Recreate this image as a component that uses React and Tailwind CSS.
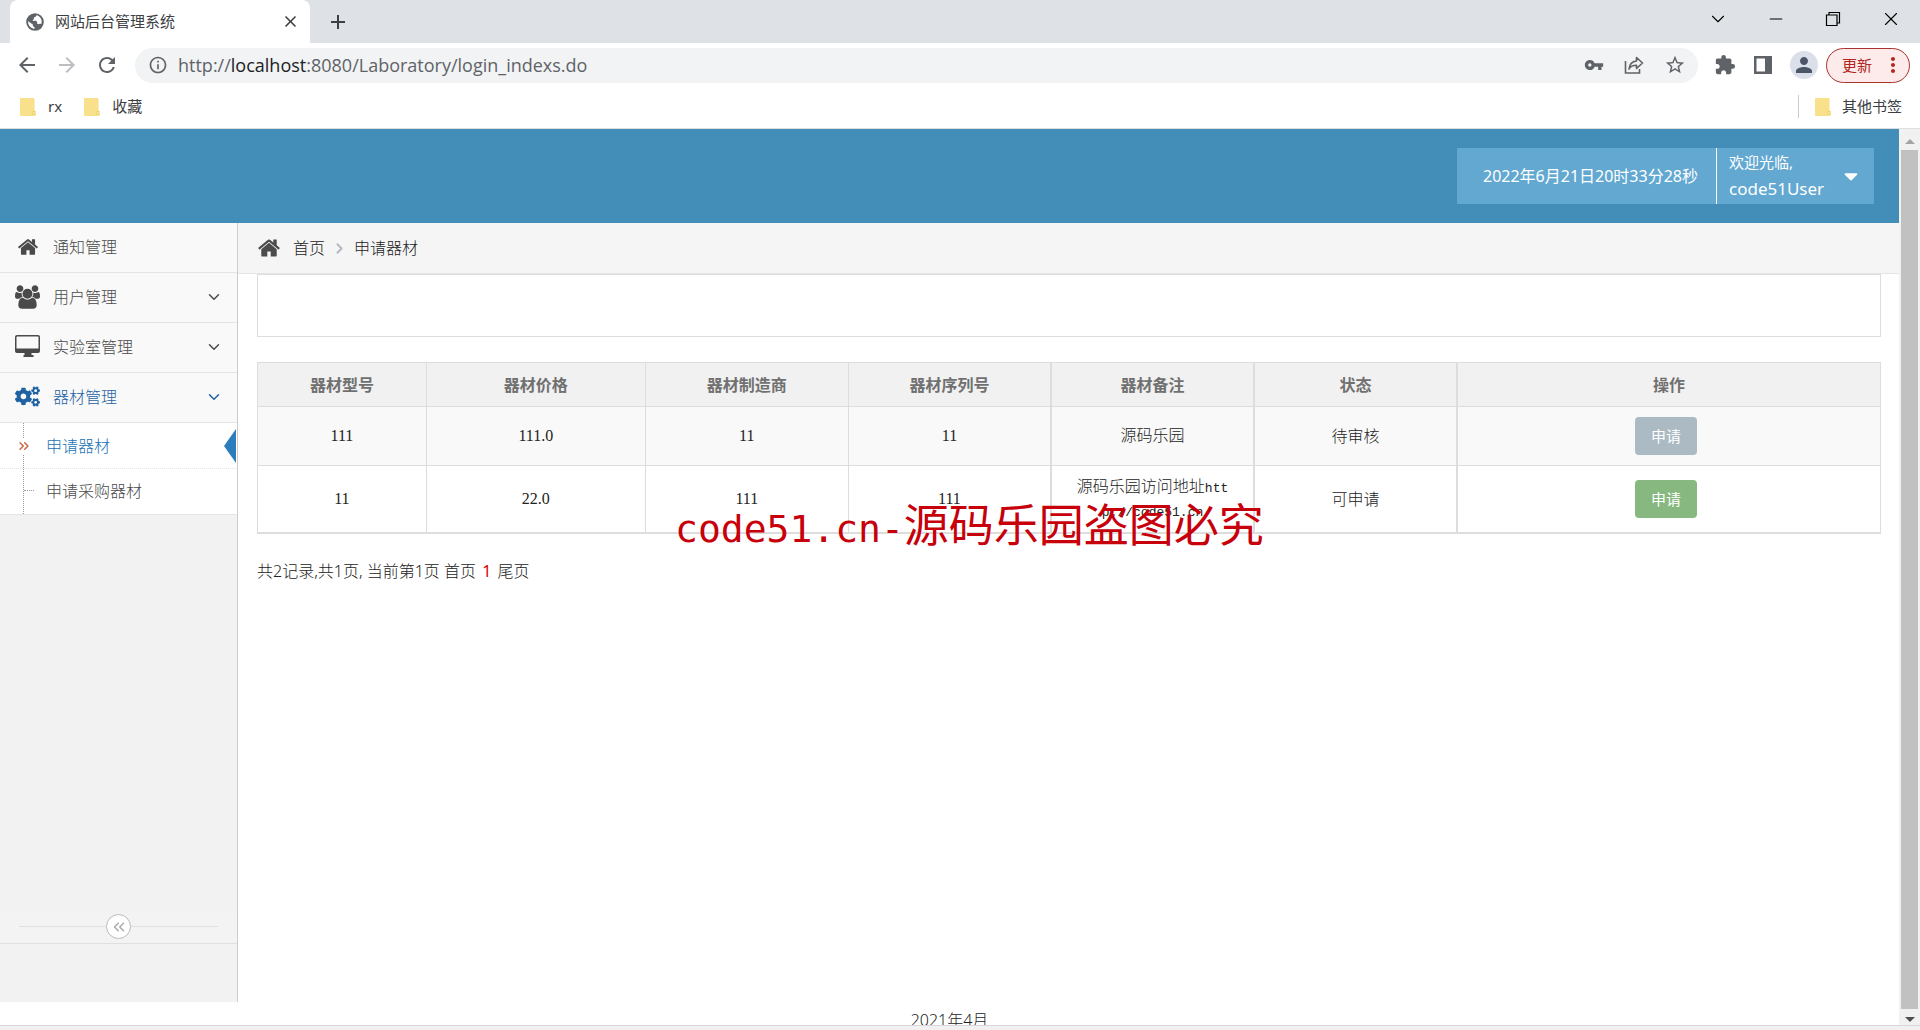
import { ChevronDown, ChevronRight, ChevronsLeft, ChevronsRight, Minus, X } from "lucide-react";
import { FaCaretDown, FaCogs } from "react-icons/fa";
import {
    MdArrowBack,
    MdArrowForward,
    MdClose,
    MdAdd,
    MdExtension,
    MdInfoOutline,
    MdMoreVert,
    MdPerson,
    MdRefresh,
    MdStarBorder,
    MdVpnKey,
} from "react-icons/md";

function GlobeIcon({ className }) {
    return (
        <svg viewBox="0 0 18 18" className={className} aria-hidden="true">
            <circle cx="9" cy="9" r="8.800" fill="currentColor" />
            <path
                d="M11.300 2.200c-1.500.2-1.200 1.500-2.200 1.700-1 .1-1.400.8-1.200 1.700.2.800-.5 1.200-1.300 1.300l.5 1.200c1.500-.4 3.500-.4 4 .8.4 1-.3 1.500.4 2.100.8.500 1.700-.4 2.700-.2l1.200.2a7 7 0 0 0-4.100-8.800zM2.100 8.200a7 7 0 0 0 6.200 7.700l.3-1.800c-1.200-.3-1.900-1-1.800-2.100.1-.9-.6-1.300-1.500-1.600C4.200 10 3.700 8.700 2.100 8.200z"
                fill="#fff"
            />
        </svg>
    );
}

function HomeIcon({ className }) {
    return (
        <svg viewBox="0 0 1792 1792" fill="currentColor" className={className} aria-hidden="true">
            <path d="M1472 992v480q0 26-19 45t-45 19h-384v-384h-256v384h-384q-26 0-45-19t-19-45v-480q0-1 .5-3t.5-3l575-474 575 474q1 2 1 6zm223-69l-62 74q-8 9-21 11h-3q-13 0-21-7l-692-577-692 577q-12 8-24 7-13-2-21-11l-62-74q-8-10-7-23.5t11-21.5l719-599q32-26 76-26t76 26l244 204v-195q0-14 9-23t23-9h192q14 0 23 9t9 23v408l219 182q10 8 11 21.5t-7 23.5z" />
        </svg>
    );
}

function UsersIcon({ className }) {
    return (
        <svg viewBox="0 0 1920 1792" fill="currentColor" className={className} aria-hidden="true">
            <path d="M593 896q-162 5-265 128h-134q-82 0-138-40.5t-56-118.5q0-353 124-353 6 0 43.5 21t97.5 42.5 119 21.5q67 0 133-23-5 37-5 66 0 139 81 256zm1071 637q0 120-73 189.5t-194 69.5h-874q-121 0-194-69.5t-73-189.5q0-53 3.5-103.5t14-109 26.5-108.5 43-97.5 62-81 85.5-53.5 111.5-20q10 0 43 21.5t73 48 107 48 135 21.5 135-21.5 107-48 73-48 43-21.5q61 0 111.5 20t85.5 53.5 62 81 43 97.5 26.5 108.5 14 109 3.5 103.5zm-1024-1277q0 106-75 181t-181 75-181-75-75-181 75-181 181-75 181 75 75 181zm704 384q0 159-112.5 271.5t-271.5 112.5-271.5-112.5-112.5-271.5 112.5-271.5 271.5-112.5 271.5 112.5 112.5 271.5zm576 225q0 78-56 118.5t-138 40.5h-134q-103-123-265-128 81-117 81-256 0-29-5-66 66 23 133 23 59 0 119-21.5t97.5-42.5 43.5-21q124 0 124 353zm-128-609q0 106-75 181t-181 75-181-75-75-181 75-181 181-75 181 75 75 181z" />
        </svg>
    );
}

function DesktopIcon({ className }) {
    return (
        <svg viewBox="0 0 25 23" fill="currentColor" className={className} aria-hidden="true">
            <path
                fillRule="evenodd"
                d="M2 0h21a2 2 0 0 1 2 2v14a2 2 0 0 1-2 2h-6.500v2h2v2H8.500v-2h1v-2H2a2 2 0 0 1-2-2V2a2 2 0 0 1 2-2zm.2 1.500a.7.7 0 0 0-.7.7v11.300h22V2.200a.7.7 0 0 0-.7-.7z"
            />
        </svg>
    );
}

function ShareIcon({ className }) {
    return (
        <svg viewBox="0 0 20 18" fill="none" stroke="currentColor" strokeWidth="1.600" className={className} aria-hidden="true">
            <path d="M1.500 5v12h14v-4" />
            <path d="M12.500 1.500 18.500 7l-6 5.500V9.300C9 9.300 6.500 10.500 5 13c.4-4 3-7.500 7.500-8z" strokeLinejoin="round" />
        </svg>
    );
}

function FolderIcon() {
    return (
        <svg viewBox="0 0 16 18" className="h-[18px] w-4 shrink-0" aria-hidden="true">
            <path d="M1 0h12.500a1 1 0 0 1 1 1v11l1 1v4a1 1 0 0 1-1 1H1a1 1 0 0 1-1-1V1a1 1 0 0 1 1-1z" fill="#f9e08a" />
            <path d="M12.500 13h3v4h-3z" fill="#f0d060" />
            <path d="M13.300 13.800h1.400v2.400h-1.400z" fill="#fbe9a6" />
        </svg>
    );
}

const columns = ["器材型号", "器材价格", "器材制造商", "器材序列号", "器材备注", "状态", "操作"];

const rows = [
    { model: "111", price: "111.0", maker: "11", serial: "11", remark: "源码乐园", status: "待审核", open: false },
    {
        model: "11",
        price: "22.0",
        maker: "111",
        serial: "111",
        remark: "源码乐园访问地址",
        url: ["htt", "p://code51.cn"],
        status: "可申请",
        open: true,
    },
];

const menu = [
    { label: "通知管理", icon: <HomeIcon className="size-[22px]" /> },
    { label: "用户管理", icon: <UsersIcon className="h-6 w-[25px]" />, arrow: true },
    { label: "实验室管理", icon: <DesktopIcon className="h-[23px] w-[25px]" />, arrow: true },
    { label: "器材管理", icon: <FaCogs className="size-[25px]" />, arrow: true, active: true },
];

function TabStrip() {
    return (
        <div className="flex h-[43px] shrink-0 items-stretch bg-[#dee1e6] pl-[10px]">
            <div className="flex w-[300px] items-center rounded-t-lg bg-white pr-[10px] pl-4 text-[#3c4043]">
                <GlobeIcon className="size-[18px] text-[#5f6368]" />
                <span className="ml-[11px] flex-1 text-[15px]">网站后台管理系统</span>
                <button aria-label="关闭标签页">
                    <MdClose className="size-[19px]" />
                </button>
            </div>
            <button aria-label="新标签页" className="ml-4 text-[#3c4043]">
                <MdAdd className="size-6" />
            </button>
            <div className="ml-auto flex items-center gap-[37px] pr-[18px] pb-[6px] text-black">
                <button aria-label="搜索标签页">
                    <ChevronDown className="size-[22px]" strokeWidth={1.2} />
                </button>
                <button aria-label="最小化">
                    <Minus className="size-5" strokeWidth={1.2} />
                </button>
                <button aria-label="还原">
                    <svg viewBox="0 0 20 20" fill="none" stroke="currentColor" strokeWidth="1.200" className="size-5">
                        <path d="M3.500 6h10.500v10.500H3.500zM6 6V3.500h10.500V14H14" />
                    </svg>
                </button>
                <button aria-label="关闭">
                    <X className="size-[22px]" strokeWidth={1.2} />
                </button>
            </div>
        </div>
    );
}

function Toolbar() {
    return (
        <div className="flex h-11 shrink-0 items-center bg-white pr-[10px] pl-[15px] text-[#5f6368]">
            <div className="flex gap-4">
                <button aria-label="后退">
                    <MdArrowBack className="size-6" />
                </button>
                <button aria-label="前进" className="text-[#bcbec1]">
                    <MdArrowForward className="size-6" />
                </button>
                <button aria-label="刷新">
                    <MdRefresh className="size-6" />
                </button>
            </div>
            <div className="ml-4 flex h-[35px] flex-1 items-center gap-5 rounded-full bg-[#f1f3f4] pr-3 pl-[13px]">
                <MdInfoOutline className="-mr-[10px] size-5" />
                <div className="flex-1 font-['Open_Sans'] text-[18px]">
                    http://<span className="text-[#202124]">localhost</span>:8080/Laboratory/login_indexs.do
                </div>
                <MdVpnKey className="size-5" />
                <ShareIcon className="h-[18px] w-5" />
                <MdStarBorder className="size-[22px]" />
            </div>
            <div className="flex items-center gap-[18px] pl-4">
                <MdExtension className="size-[22px]" />
                <svg viewBox="0 0 18 18" className="size-[18px]" aria-hidden="true">
                    <path fillRule="evenodd" fill="currentColor" d="M0 0h18v18H0zM2.500 2.500v13h8.500V2.500z" />
                </svg>
                <span className="flex size-7 items-center justify-center rounded-full bg-[#dadfea]">
                    <MdPerson className="size-6 text-[#4a5568]" />
                </span>
            </div>
            <button className="ml-2 flex h-[35px] w-[84px] items-center justify-between rounded-full border border-[#a8322c] bg-[#fcebea] pr-1 pl-[15px] text-[15px] text-[#b3261e]">
                更新
                <MdMoreVert className="size-6" />
            </button>
        </div>
    );
}

function Bookmarks() {
    return (
        <div className="flex h-[42px] shrink-0 items-center border-b border-[#dcdfe2] bg-white pr-[18px] pb-[2px] pl-5 text-[15px] text-[#3c4043]">
            <a href="#rx" className="flex items-center gap-3">
                <FolderIcon />
                rx
            </a>
            <a href="#fav" className="ml-[22px] flex items-center gap-3">
                <FolderIcon />
                收藏
            </a>
            <a href="#other" className="ml-auto flex items-center gap-[11px] border-l border-[#c8cbce] pl-4">
                <FolderIcon />
                其他书签
            </a>
        </div>
    );
}

function Header() {
    return (
        <header className="flex h-[94px] shrink-0 items-center justify-end bg-[#438eb9] pr-[25px] text-white">
            <div className="flex h-14 items-stretch bg-[#62a8d1]">
                <div className="flex w-[259px] items-center justify-center pl-2 text-base">2022年6月21日20时33分28秒</div>
                <button className="flex w-[158px] items-center justify-between border-l border-white pr-3 pl-3 text-left">
                    <span>
                        <span className="block text-[15px] leading-[26px]">欢迎光临,</span>
                        <span className="block text-[17px] leading-[28px]">code51User</span>
                    </span>
                    <FaCaretDown className="size-[22px]" />
                </button>
            </div>
        </header>
    );
}

function Sidebar() {
    return (
        <aside className="flex w-[238px] shrink-0 flex-col border-r border-[#ccc] bg-[#f2f2f2] font-light">
            <nav className="text-base text-[#4a4a4a]">
                {menu.map((item) => (
                    <a
                        key={item.label}
                        href="#menu"
                        className={`flex h-[50px] items-center border-b border-[#e5e5e5] bg-[#f9f9f9] pr-[14px] pb-[2px] pl-[15px] ${item.active ? "text-[#1f62a4]" : ""}`}
                    >
                        <span className="flex w-[25px] justify-center">{item.icon}</span>
                        <span className="ml-[13px] flex-1">{item.label}</span>
                        {item.arrow && <ChevronDown className="size-[18px]" strokeWidth={2} />}
                    </a>
                ))}
                <div className="relative border-b border-[#e5e5e5] bg-white">
                    <span className="absolute inset-y-0 left-[23px] border-l border-dotted border-[#999]" />
                    <a href="#apply" className="relative flex h-[46px] items-center border-b border-dotted border-[#e4e4e4] pl-4 text-[#2272b4]">
                        <ChevronsRight className="size-4 bg-white text-[#c86139]" strokeWidth={2} />
                        <span className="ml-[14px]">申请器材</span>
                        <span className="absolute top-[6px] right-[1px] border-y-[17px] border-r-[12px] border-y-transparent border-r-[#2b7dbc]" />
                    </a>
                    <a href="#purchase" className="flex h-[45px] items-center pb-[2px] pl-6">
                        <span className="w-[10px] border-t border-dotted border-[#999]" />
                        <span className="ml-3">申请采购器材</span>
                    </a>
                </div>
            </nav>
            <div className="mt-auto mb-[58px] flex h-8 items-center border-b border-[#e0e0e0] bg-[#f3f3f3] px-[19px] pb-[2px]">
                <span className="flex-1 border-t border-[#e0e0e0]" />
                <button aria-label="收起菜单" className="flex size-[25px] items-center justify-center rounded-full border border-[#bbb] bg-white text-[#aaa]">
                    <ChevronsLeft className="size-[18px]" strokeWidth={2} />
                </button>
                <span className="flex-1 border-t border-[#e0e0e0]" />
            </div>
        </aside>
    );
}

function NumberCell({ children }) {
    return <td className="border-l border-[#ddd] font-['Liberation_Serif']">{children}</td>;
}

function EquipmentTable() {
    return (
        <table className="mt-[25px] w-full table-fixed border-collapse border border-b-2 border-[#ddd] text-center text-base">
            <colgroup>
                <col className="w-[10.400%]" />
                <col className="w-[13.500%]" />
                <col className="w-[12.500%]" />
                <col className="w-[12.500%]" />
                <col className="w-[12.500%]" />
                <col className="w-[12.500%]" />
                <col />
            </colgroup>
            <thead>
                <tr className="h-11 bg-[#f1f1f1] text-[#707070]">
                    {columns.map((name, i) => (
                        <th key={name} className={`border-b border-[#ddd] font-bold ${i > 3 ? "border-l-2" : "border-l"}`}>
                            {name}
                        </th>
                    ))}
                </tr>
            </thead>
            <tbody className="text-[#222]">
                {rows.map((row) => (
                    <tr key={row.price} className={row.open ? "h-[67px] bg-white" : "h-[59px] border-b border-[#ddd] bg-[#f9f9f9]"}>
                        <NumberCell>{row.model}</NumberCell>
                        <NumberCell>{row.price}</NumberCell>
                        <NumberCell>{row.maker}</NumberCell>
                        <NumberCell>{row.serial}</NumberCell>
                        <td className="border-l-2 border-[#ddd] pb-[2px] leading-6 font-light">
                            {row.remark}
                            {row.url && (
                                <span className="font-['Liberation_Mono'] text-[13px] leading-none font-normal">
                                    {row.url[0]}
                                    <br />
                                    {row.url[1]}
                                </span>
                            )}
                        </td>
                        <td className="border-l-2 border-[#ddd] font-light">{row.status}</td>
                        <td className="border-l-2 border-[#ddd]">
                            <button
                                className={`mr-[6px] h-[38px] w-[62px] rounded text-[15px] text-white ${row.open ? "bg-[#87b87f]" : "bg-[#abbac3]"}`}
                            >
                                申请
                            </button>
                        </td>
                    </tr>
                ))}
            </tbody>
        </table>
    );
}

function Main() {
    return (
        <main className="relative min-w-0 flex-1">
            <div className="flex h-[51px] items-center border-b border-[#e5e5e5] bg-[#f5f5f5] pl-[19px] text-base font-light text-[#222]">
                <HomeIcon className="size-6 text-[#4c4c4c]" />
                <a href="#home" className="ml-3">
                    首页
                </a>
                <ChevronRight className="mx-[6px] size-[17px] text-[#b2b6bf]" strokeWidth={2.5} />
                <span>申请器材</span>
            </div>
            <div className="pr-[18px] pl-[19px]">
                <div className="h-[63px] border border-[#ddd]" />
                <EquipmentTable />
                <div className="mt-[25px] text-base font-light text-[#222]">
                    共2记录,共1页, 当前第1页 <a href="#first">首页</a> <span className="mx-[2px] font-normal text-[#e00000]">1</span>{" "}
                    <a href="#last">尾页</a>
                </div>
            </div>
            <div className="pointer-events-none absolute top-[268px] left-[437px] font-['DejaVu_Sans_Mono'] text-[38px] leading-[64px] whitespace-nowrap text-[#c7000b]">
                code51.cn-<span className="font-['Noto_Sans_CJK_SC'] text-[45px]">源码乐园盗图必究</span>
            </div>
        </main>
    );
}

function Scrollbar() {
    return (
        <div className="flex w-[21px] shrink-0 flex-col items-center bg-[#f1f1f1]" aria-hidden="true">
            <span className="mt-[10px] mb-[6px] border-x-[5px] border-b-[5px] border-x-transparent border-b-[#a3a3a3]" />
            <span className="w-[17px] flex-1 bg-[#c1c1c1]" />
            <span className="mt-2 mb-[3px] border-x-[5px] border-t-[5px] border-x-transparent border-t-[#505050]" />
        </div>
    );
}

export default function App() {
    return (
        <div className="flex h-screen flex-col overflow-hidden bg-white font-['Noto_Sans','Noto_Sans_CJK_SC',sans-serif]">
            <TabStrip />
            <Toolbar />
            <Bookmarks />
            <div className="flex min-h-0 flex-1">
                <div className="flex min-w-0 flex-1 flex-col">
                    <Header />
                    <div className="flex min-h-0 flex-1">
                        <Sidebar />
                        <Main />
                    </div>
                    <footer className="h-[23px] shrink-0 overflow-hidden pt-[6px] text-center text-base font-light text-[#222]">2021年4月</footer>
                </div>
                <Scrollbar />
            </div>
            <div className="h-[5px] shrink-0 border-t border-[#d8d8d8] bg-[#f1f1f1]" />
        </div>
    );
}
